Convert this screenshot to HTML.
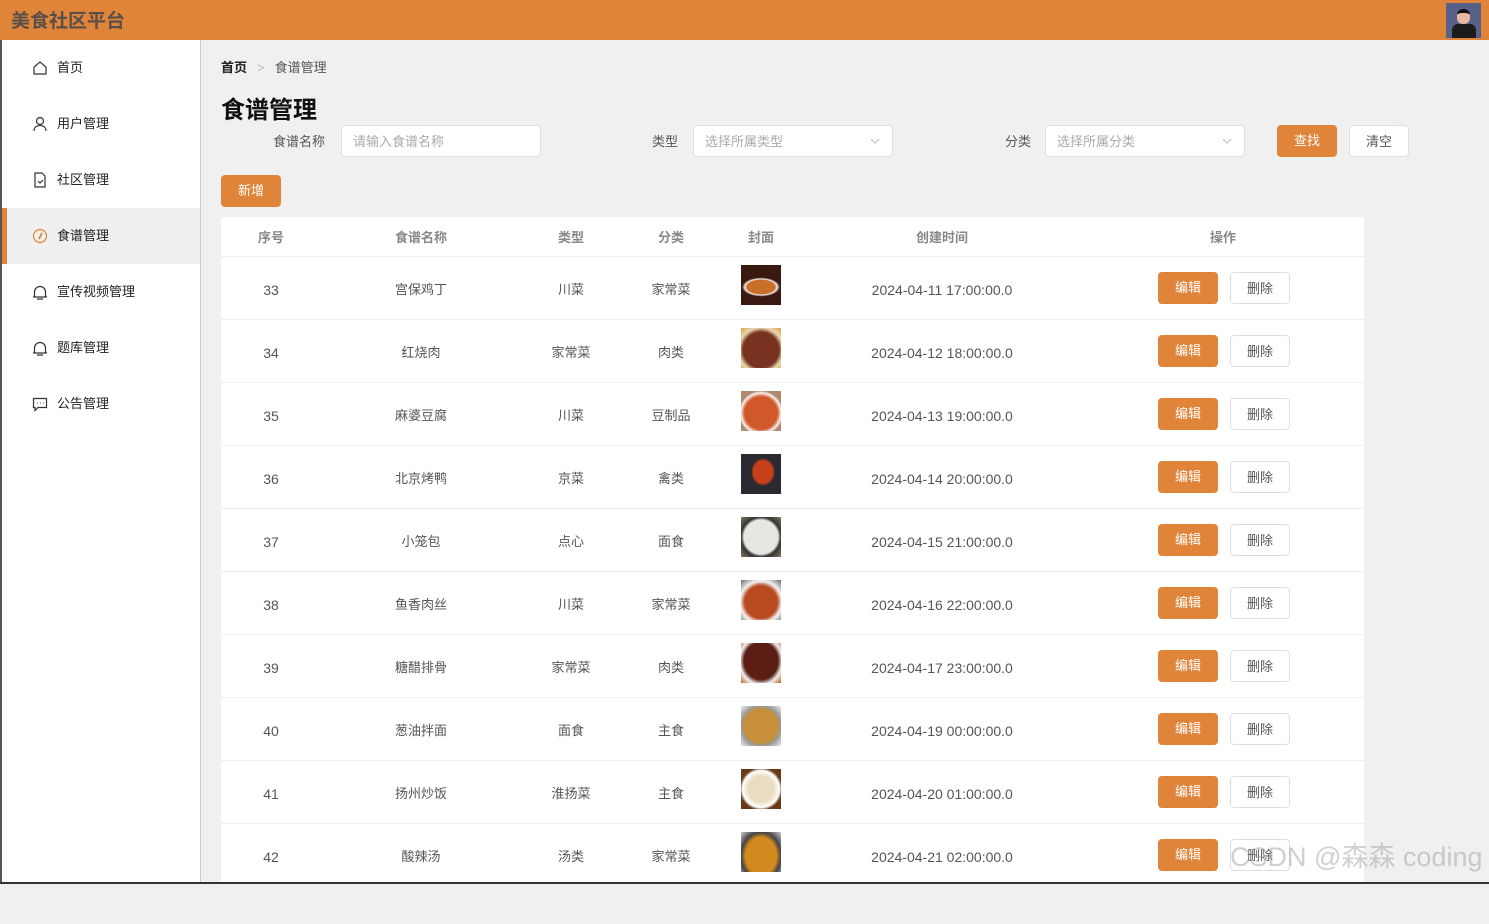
<!DOCTYPE html>
<html><head><meta charset="utf-8"><style>
*{margin:0;padding:0;box-sizing:border-box}
body{width:1489px;height:884px;overflow:hidden;background:#f0f0f0;font-family:"Liberation Sans","Noto Sans CJK SC",sans-serif;font-size:13px;color:#333;position:relative;line-height:16px}
.top{position:absolute;left:0;top:0;width:1489px;height:40px;background:#e0843a}
.logo{position:absolute;left:11px;top:10px;font-size:19px;line-height:24px;font-weight:bold;color:#5a4f48}
.av{position:absolute;left:1446px;top:3px;width:35px;height:35px;background:#586189}
.side{position:absolute;left:0;top:40px;width:201px;height:844px;background:#fff;border-left:2px solid #555;border-right:1px solid #ccc}
.mi{height:56px;display:flex;align-items:center;padding-left:30px;font-size:13px;color:#222}
.mi svg{width:16px;height:16px;margin-right:9px}
.mi.act{background:#efefef;border-left:5px solid #e0843a;padding-left:25px}
.abs{position:absolute}
.inp{position:absolute;height:32px;background:#fff;border:1px solid #dcdfe6;border-radius:4px;color:#aaa;font-size:13px;padding:8px 11px}
.btn{position:absolute;height:32px;border-radius:4px;text-align:center;line-height:31px;font-size:13px}
.or{background:#e0843a;color:#fff}
.wh{background:#fff;border:1px solid #dcdfe6;color:#555}
.tbl{position:absolute;left:221px;top:217px;width:1143px;height:667px;background:#fff}
.row{position:absolute;left:0;width:1143px;height:63px;border-bottom:1px solid #ebeef5}
.c{position:absolute;transform:translateX(-50%);white-space:nowrap;color:#555;line-height:16px;top:25px}
.t{font-size:14px}
.img{position:absolute;left:520px;top:8px;width:40px;height:40px}
</style></head><body>
<div class="top"><div class="logo">美食社区平台</div><div class="av"><div style="position:absolute;left:11px;top:6px;width:13px;height:15px;border-radius:6px;background:#e8b9a0;border-top:4px solid #111"></div><div style="position:absolute;left:6px;top:21px;width:24px;height:14px;background:#1b1b1b;border-radius:6px 6px 0 0"></div></div></div>
<div class="side">
<div class="mi"><svg viewBox="0 0 16 16" fill="none" stroke="#333" stroke-width="1.2"><path d="M2 7L8 2l6 5v7H2z"/></svg>首页</div>
<div class="mi"><svg viewBox="0 0 16 16" fill="none" stroke="#333" stroke-width="1.2"><circle cx="8" cy="5" r="3.5"/><path d="M2 15c0-4 3-5.5 6-5.5s6 1.5 6 5.5"/></svg>用户管理</div>
<div class="mi"><svg viewBox="0 0 16 16" fill="none" stroke="#333" stroke-width="1.2"><path d="M3 1h7l3 3v11H3z"/><path d="M6 9l2 2 3-3"/></svg>社区管理</div>
<div class="mi act"><svg viewBox="0 0 16 16" fill="none" stroke="#e0843a" stroke-width="1.2"><circle cx="8" cy="8" r="6.5"/><path d="M10 5L7 11" stroke-width="1.8"/></svg>食谱管理</div>
<div class="mi"><svg viewBox="0 0 16 16" fill="none" stroke="#333" stroke-width="1.2"><path d="M1 13h14M2.5 13V8a5.5 5.5 0 0111 0v5M5 15h6"/></svg>宣传视频管理</div>
<div class="mi"><svg viewBox="0 0 16 16" fill="none" stroke="#333" stroke-width="1.2"><path d="M1 13h14M2.5 13V8a5.5 5.5 0 0111 0v5M5 15h6"/></svg>题库管理</div>
<div class="mi"><svg viewBox="0 0 16 16" fill="none" stroke="#333" stroke-width="1.2"><path d="M1.5 2.5h13v9H6l-3 3v-3H1.5z"/><path d="M5 7h.5M8 7h.5M11 7h.5" stroke-width="1.5"/></svg>公告管理</div>
</div>
<div class="abs" style="left:221px;top:60px;font-size:13px"><b style="color:#222">首页</b><span style="color:#bbb;margin:0 10px">&gt;</span><span style="color:#555">食谱管理</span></div>
<div class="abs" style="left:221px;top:96px;font-size:24px;line-height:30px;font-weight:bold;color:#111">食谱管理</div>
<div class="abs" style="left:273px;top:134px;color:#555">食谱名称</div>
<div class="inp" style="left:341px;top:125px;width:200px">请输入食谱名称</div>
<div class="abs" style="left:652px;top:134px;color:#555">类型</div>
<div class="inp" style="left:693px;top:125px;width:200px">选择所属类型<svg style="position:absolute;right:12px;top:11px" width="10" height="8" viewBox="0 0 10 8"><path d="M1 2l4 4 4-4" fill="none" stroke="#bbb"/></svg></div>
<div class="abs" style="left:1005px;top:134px;color:#555">分类</div>
<div class="inp" style="left:1045px;top:125px;width:200px">选择所属分类<svg style="position:absolute;right:12px;top:11px" width="10" height="8" viewBox="0 0 10 8"><path d="M1 2l4 4 4-4" fill="none" stroke="#bbb"/></svg></div>
<div class="btn or" style="left:1277px;top:125px;width:60px;line-height:32px">查找</div>
<div class="btn wh" style="left:1349px;top:125px;width:60px">清空</div>
<div class="btn or" style="left:221px;top:175px;width:60px;line-height:32px">新增</div>
<div class="tbl">
<div class="row" style="top:0;height:40px;font-weight:bold"><span class="c" style="left:50px;top:13px;color:#888">序号</span><span class="c" style="left:200px;top:13px;color:#888">食谱名称</span><span class="c" style="left:350px;top:13px;color:#888">类型</span><span class="c" style="left:450px;top:13px;color:#888">分类</span><span class="c" style="left:540px;top:13px;color:#888">封面</span><span class="c" style="left:721px;top:13px;color:#888">创建时间</span><span class="c" style="left:1002px;top:13px;color:#888">操作</span></div>
</div>
<div class="tbl" style="background:none;top:257px">
<div class="row" style="top:0"><span class="c t" style="left:50px">33</span><span class="c" style="left:200px">宫保鸡丁</span><span class="c" style="left:350px">川菜</span><span class="c" style="left:450px">家常菜</span><div class="img" style="background:radial-gradient(ellipse 20px 10px at 50% 55%,#c8702a 70%,#f4f0ea 80%,#3a1a10 95%)"></div><span class="c t" style="left:721px">2024-04-11 17:00:00.0</span><div class="btn or" style="left:937px;top:15px;width:60px;line-height:32px">编辑</div><div class="btn wh" style="left:1009px;top:15px;width:60px">删除</div></div>
<div class="row" style="top:63px"><span class="c t" style="left:50px">34</span><span class="c" style="left:200px">红烧肉</span><span class="c" style="left:350px">家常菜</span><span class="c" style="left:450px">肉类</span><div class="img" style="background:radial-gradient(circle at 50% 55%,#7a3220 60%,#e8d8b0 75%,#d9a040)"></div><span class="c t" style="left:721px">2024-04-12 18:00:00.0</span><div class="btn or" style="left:937px;top:15px;width:60px;line-height:32px">编辑</div><div class="btn wh" style="left:1009px;top:15px;width:60px">删除</div></div>
<div class="row" style="top:126px"><span class="c t" style="left:50px">35</span><span class="c" style="left:200px">麻婆豆腐</span><span class="c" style="left:350px">川菜</span><span class="c" style="left:450px">豆制品</span><div class="img" style="background:radial-gradient(circle at 50% 55%,#d0582a 55%,#f6f2ee 68%,#b08a70 75%)"></div><span class="c t" style="left:721px">2024-04-13 19:00:00.0</span><div class="btn or" style="left:937px;top:15px;width:60px;line-height:32px">编辑</div><div class="btn wh" style="left:1009px;top:15px;width:60px">删除</div></div>
<div class="row" style="top:189px"><span class="c t" style="left:50px">36</span><span class="c" style="left:200px">北京烤鸭</span><span class="c" style="left:350px">京菜</span><span class="c" style="left:450px">禽类</span><div class="img" style="background:radial-gradient(ellipse 12px 14px at 55% 45%,#c8401a 80%,#2a2a30 100%)"></div><span class="c t" style="left:721px">2024-04-14 20:00:00.0</span><div class="btn or" style="left:937px;top:15px;width:60px;line-height:32px">编辑</div><div class="btn wh" style="left:1009px;top:15px;width:60px">删除</div></div>
<div class="row" style="top:252px"><span class="c t" style="left:50px">37</span><span class="c" style="left:200px">小笼包</span><span class="c" style="left:350px">点心</span><span class="c" style="left:450px">面食</span><div class="img" style="background:radial-gradient(circle at 50% 50%,#e8e6e0 60%,#333 70%,#8a7a60)"></div><span class="c t" style="left:721px">2024-04-15 21:00:00.0</span><div class="btn or" style="left:937px;top:15px;width:60px;line-height:32px">编辑</div><div class="btn wh" style="left:1009px;top:15px;width:60px">删除</div></div>
<div class="row" style="top:315px"><span class="c t" style="left:50px">38</span><span class="c" style="left:200px">鱼香肉丝</span><span class="c" style="left:350px">川菜</span><span class="c" style="left:450px">家常菜</span><div class="img" style="background:radial-gradient(circle at 50% 55%,#b84a20 55%,#f4f4f4 70%,#666)"></div><span class="c t" style="left:721px">2024-04-16 22:00:00.0</span><div class="btn or" style="left:937px;top:15px;width:60px;line-height:32px">编辑</div><div class="btn wh" style="left:1009px;top:15px;width:60px">删除</div></div>
<div class="row" style="top:378px"><span class="c t" style="left:50px">39</span><span class="c" style="left:200px">糖醋排骨</span><span class="c" style="left:350px">家常菜</span><span class="c" style="left:450px">肉类</span><div class="img" style="background:radial-gradient(ellipse at 50% 45%,#5a1e14 60%,#eee 75%,#c06020)"></div><span class="c t" style="left:721px">2024-04-17 23:00:00.0</span><div class="btn or" style="left:937px;top:15px;width:60px;line-height:32px">编辑</div><div class="btn wh" style="left:1009px;top:15px;width:60px">删除</div></div>
<div class="row" style="top:441px"><span class="c t" style="left:50px">40</span><span class="c" style="left:200px">葱油拌面</span><span class="c" style="left:350px">面食</span><span class="c" style="left:450px">主食</span><div class="img" style="background:radial-gradient(circle at 50% 50%,#c8903a 60%,#999 70%,#eee)"></div><span class="c t" style="left:721px">2024-04-19 00:00:00.0</span><div class="btn or" style="left:937px;top:15px;width:60px;line-height:32px">编辑</div><div class="btn wh" style="left:1009px;top:15px;width:60px">删除</div></div>
<div class="row" style="top:504px"><span class="c t" style="left:50px">41</span><span class="c" style="left:200px">扬州炒饭</span><span class="c" style="left:350px">淮扬菜</span><span class="c" style="left:450px">主食</span><div class="img" style="background:radial-gradient(circle at 50% 50%,#eadcc0 45%,#fff 65%,#6a3a18 75%)"></div><span class="c t" style="left:721px">2024-04-20 01:00:00.0</span><div class="btn or" style="left:937px;top:15px;width:60px;line-height:32px">编辑</div><div class="btn wh" style="left:1009px;top:15px;width:60px">删除</div></div>
<div class="row" style="top:567px"><span class="c t" style="left:50px">42</span><span class="c" style="left:200px">酸辣汤</span><span class="c" style="left:350px">汤类</span><span class="c" style="left:450px">家常菜</span><div class="img" style="background:radial-gradient(ellipse at 50% 60%,#d08a20 55%,#444 70%,#ccc)"></div><span class="c t" style="left:721px">2024-04-21 02:00:00.0</span><div class="btn or" style="left:937px;top:15px;width:60px;line-height:32px">编辑</div><div class="btn wh" style="left:1009px;top:15px;width:60px">删除</div></div>
</div>
<div class="abs" style="left:1230px;top:842px;font-size:27px;line-height:30px;color:rgba(150,150,150,0.45);white-space:nowrap">CSDN @森森 coding</div>
<div class="abs" style="left:0;top:882px;width:1489px;height:2px;background:#333"></div>
</body></html>
